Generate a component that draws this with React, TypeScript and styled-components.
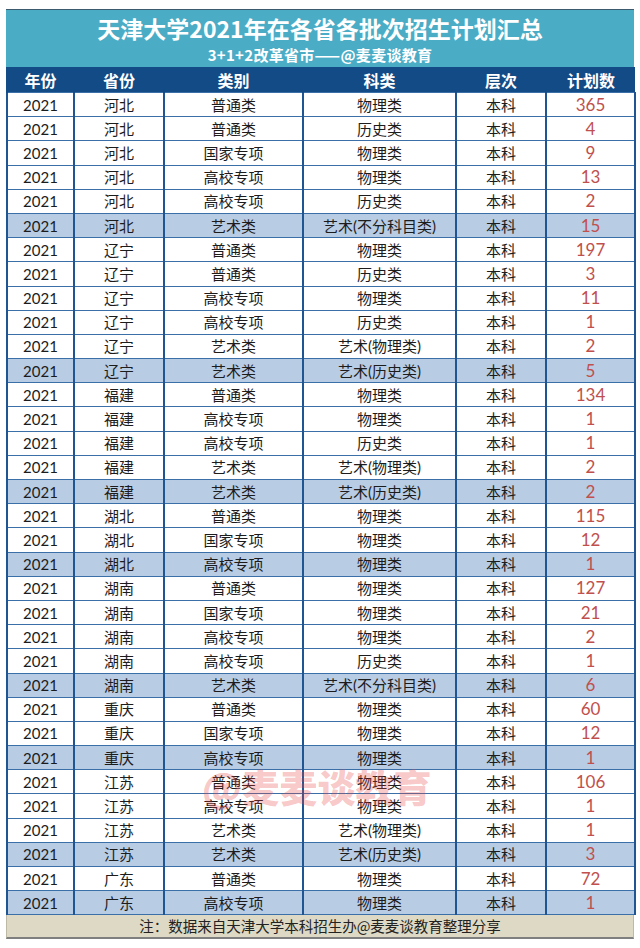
import React from 'react';
import styled, { createGlobalStyle } from 'styled-components';

type Row = [string, string, string, string, boolean?];

const DATA: Row[] = [
  ['河北', '普通类', '物理类', '365'],
  ['河北', '普通类', '历史类', '4'],
  ['河北', '国家专项', '物理类', '9'],
  ['河北', '高校专项', '物理类', '13'],
  ['河北', '高校专项', '历史类', '2'],
  ['河北', '艺术类', '艺术(不分科目类)', '15', true],
  ['辽宁', '普通类', '物理类', '197'],
  ['辽宁', '普通类', '历史类', '3'],
  ['辽宁', '高校专项', '物理类', '11'],
  ['辽宁', '高校专项', '历史类', '1'],
  ['辽宁', '艺术类', '艺术(物理类)', '2'],
  ['辽宁', '艺术类', '艺术(历史类)', '5', true],
  ['福建', '普通类', '物理类', '134'],
  ['福建', '高校专项', '物理类', '1'],
  ['福建', '高校专项', '历史类', '1'],
  ['福建', '艺术类', '艺术(物理类)', '2'],
  ['福建', '艺术类', '艺术(历史类)', '2', true],
  ['湖北', '普通类', '物理类', '115'],
  ['湖北', '国家专项', '物理类', '12'],
  ['湖北', '高校专项', '物理类', '1', true],
  ['湖南', '普通类', '物理类', '127'],
  ['湖南', '国家专项', '物理类', '21'],
  ['湖南', '高校专项', '物理类', '2'],
  ['湖南', '高校专项', '历史类', '1'],
  ['湖南', '艺术类', '艺术(不分科目类)', '6', true],
  ['重庆', '普通类', '物理类', '60'],
  ['重庆', '国家专项', '物理类', '12'],
  ['重庆', '高校专项', '物理类', '1', true],
  ['江苏', '普通类', '物理类', '106'],
  ['江苏', '高校专项', '物理类', '1'],
  ['江苏', '艺术类', '艺术(物理类)', '1'],
  ['江苏', '艺术类', '艺术(历史类)', '3', true],
  ['广东', '普通类', '物理类', '72'],
  ['广东', '高校专项', '物理类', '1', true],
];

const COLS = [67, 90, 139, 153, 90, 89];
const HEADS = ['年份', '省份', '类别', '科类', '层次', '计划数'];

const GlobalStyle = createGlobalStyle`
  html, body {
    margin: 0;
    padding: 0;
    background: #fff;
  }
  body {
    font-family: Lato, "Noto Sans CJK SC", sans-serif;
  }
`;

const Page = styled.div`
  width: 640px;
  height: 948px;
  padding: 9px 0 0 6px;
  box-sizing: border-box;
`;

const Sheet = styled.div`
  position: relative;
  width: 628px;
`;

const TitleBand = styled.div`
  height: 58px;
  background: #4bacc6;
  border-top: 1px solid #3c5a6e;
  box-sizing: border-box;
  display: flex;
  flex-direction: column;
  align-items: center;
  color: #fff;
  font-weight: 700;
`;

const Title = styled.div`
  font-family: "Noto Sans CJK SC", sans-serif;
  font-size: 23px;
  line-height: 34px;
  margin-top: 1px;
`;

const Subtitle = styled.div`
  font-family: "Noto Sans CJK SC", sans-serif;
  font-size: 15px;
  line-height: 19px;
  letter-spacing: 0.3px;
`;

const Table = styled.table`
  width: 628px;
  border-collapse: collapse;
  table-layout: fixed;
`;

const HeadCell = styled.th`
  height: 25px;
  padding: 0;
  background: #124b85;
  color: #fff;
  font-family: "Noto Sans CJK SC", sans-serif;
  font-size: 16px;
  font-weight: 700;
  line-height: 24px;
  text-align: center;
  border-left: 2px solid #124b85;
`;

const BodyRow = styled.tr<{ $hi?: boolean }>`
  height: 24.2px;
  background: ${(p) => (p.$hi ? '#b8cce4' : '#fff')};
`;

const Cell = styled.td<{ $num?: boolean }>`
  padding: 0;
  text-align: center;
  line-height: 22px;
  font-family: ${(p) => (p.$num ? 'Lato' : 'Lato, "Noto Sans CJK SC"')}, sans-serif;
  font-size: ${(p) => (p.$num ? '17px' : '15px')};
  color: ${(p) => (p.$num ? '#c0504d' : '#1c1c1c')};
  border-top: 1px solid #3a6fa8;
  border-bottom: 1px solid #3a6fa8;
  border-left: 2px solid #1f5592;
  border-right: 2px solid #1f5592;
`;

const Footer = styled.div`
  height: 22px;
  background: #ddd9c4;
  border-bottom: 2px solid #7f7f7f;
  border-left: 1px solid #bdb9a6;
  border-right: 1px solid #bdb9a6;
  text-align: center;
  font-family: "Noto Sans CJK SC", sans-serif;
  font-size: 14.5px;
  line-height: 22px;
  color: #222;
`;

const Watermark = styled.div`
  position: absolute;
  left: 196px;
  top: 755px;
  font-family: "Noto Sans CJK SC", sans-serif;
  font-weight: 900;
  font-size: 38px;
  line-height: 44px;
  color: rgba(232, 70, 70, 0.3);
  pointer-events: none;
  white-space: nowrap;
`;

export default function App() {
  return (
    <Page>
      <GlobalStyle />
      <Sheet>
        <TitleBand>
          <Title>天津大学2021年在各省各批次招生计划汇总</Title>
          <Subtitle>3+1+2改革省市——@麦麦谈教育</Subtitle>
        </TitleBand>
        <Table>
          <colgroup>
            {COLS.map((w, i) => (
              <col key={i} style={{ width: w }} />
            ))}
          </colgroup>
          <thead>
            <tr>
              {HEADS.map((h) => (
                <HeadCell key={h}>{h}</HeadCell>
              ))}
            </tr>
          </thead>
          <tbody>
            {DATA.map(([prov, kind, subj, n, hi], i) => (
              <BodyRow key={i} $hi={hi}>
                <Cell>2021</Cell>
                <Cell>{prov}</Cell>
                <Cell>{kind}</Cell>
                <Cell>{subj}</Cell>
                <Cell>本科</Cell>
                <Cell $num>{n}</Cell>
              </BodyRow>
            ))}
          </tbody>
        </Table>
        <Footer>注：数据来自天津大学本科招生办@麦麦谈教育整理分享</Footer>
        <Watermark>@麦麦谈教育</Watermark>
      </Sheet>
    </Page>
  );
}
